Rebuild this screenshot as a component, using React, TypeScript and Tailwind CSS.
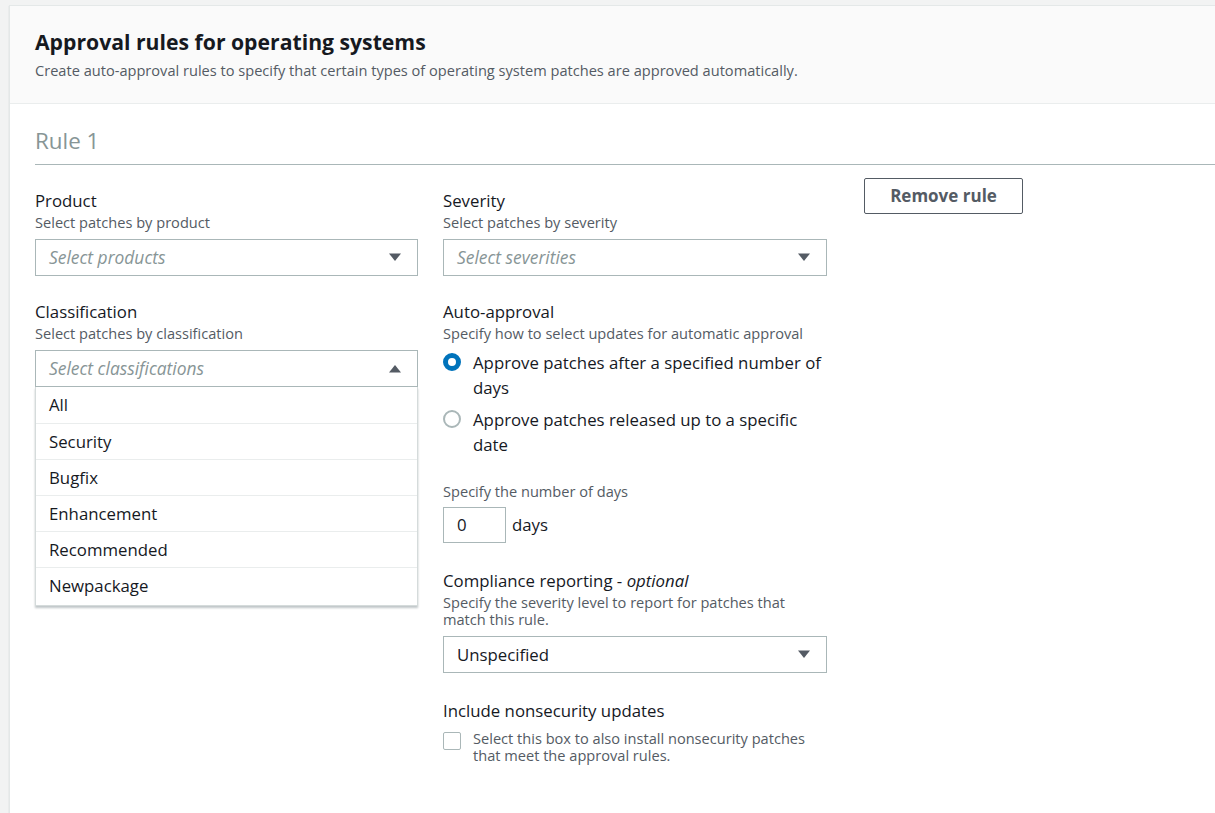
import type { ReactNode } from 'react'

const FONT = { fontFamily: '"Open Sans", "Noto Sans", Arial, sans-serif' }

function Caret({ up = false }: { readonly up?: boolean }) {
  return (
    <svg width="14" height="9" viewBox="0 0 14 9" className="shrink-0">
      {up ? (
        <path d="M1 8.5 L7 1 L13 8.5 Z" fill="#545b64" />
      ) : (
        <path d="M1 0.5 L13 0.5 L7 8 Z" fill="#545b64" />
      )}
    </svg>
  )
}

function Field({
  label,
  description,
  children,
}: {
  readonly label: ReactNode
  readonly description: ReactNode
  readonly children: ReactNode
}) {
  return (
    <div>
      <div className="text-[16.8px] leading-[22px] text-[#16191f]">{label}</div>
      <div className="mt-[2px] text-[14.6px] leading-[17px] text-[#545b64]">
        {description}
      </div>
      <div className="mt-[8px]">{children}</div>
    </div>
  )
}

function Select({
  value,
  placeholder,
  open = false,
}: {
  readonly value?: string
  readonly placeholder?: string
  readonly open?: boolean
}) {
  return (
    <div className="flex h-[37px] items-center justify-between border border-[#aab7b8] bg-white pl-[13px] pr-[15px]">
      {value ? (
        <span className="text-[16.8px] text-[#16191f]">{value}</span>
      ) : (
        <span className="text-[17.4px] italic text-[#879596]">{placeholder}</span>
      )}
      <Caret up={open} />
    </div>
  )
}

const classifications = [
  'All',
  'Security',
  'Bugfix',
  'Enhancement',
  'Recommended',
  'Newpackage',
]

function Radio({
  checked,
  children,
}: {
  readonly checked: boolean
  readonly children: ReactNode
}) {
  return (
    <div className="flex items-start gap-[12px]">
      <span
        className={
          checked
            ? 'mt-[3px] h-[18px] w-[18px] shrink-0 rounded-full border-[5px] border-[#0073bb] bg-white'
            : 'mt-[3px] h-[18px] w-[18px] shrink-0 rounded-full border-2 border-[#aab7b8] bg-white'
        }
      />
      <span className="text-[16.8px] leading-[25px] text-[#16191f]">{children}</span>
    </div>
  )
}

export default function App() {
  return (
    <div
      className="min-h-[813px] overflow-hidden bg-[#f2f3f3] pl-[9px] pt-[5px]"
      style={FONT}
    >
      <div className="min-h-[808px] border-l border-t border-[#e4e8e8] bg-white shadow-[0_1px_1px_rgba(0,28,36,0.2)]">
        <header className="border-b border-[#eaeded] bg-[#fafafa] px-[25px] pb-[23px] pt-[22px]">
          <h1 className="text-[21.2px] font-bold leading-[28px] text-[#16191f]">
            Approval rules for operating systems
          </h1>
          <p className="mt-[4px] text-[14.6px] leading-[20px] text-[#545b64]">
            Create auto-approval rules to specify that certain types of operating
            system patches are approved automatically.
          </p>
        </header>

        <section className="pl-[25px]">
          <h2 className="border-b border-[#aab7b8] pb-[9px] pt-[23px] text-[22.4px] leading-[28px] text-[#879596]">
            Rule 1
          </h2>

          <div className="flex items-start">
            <div className="w-[383px] pt-[25px]">
              <Field label="Product" description="Select patches by product">
                <Select placeholder="Select products" />
              </Field>

              <div className="mt-[25px]">
                <Field
                  label="Classification"
                  description="Select patches by classification"
                >
                  <Select placeholder="Select classifications" open />
                  <ul className="border border-t-0 border-[#d5dbdb] bg-white pb-[2px] shadow-[0_2px_2px_rgba(0,28,36,0.25)]">
                    {classifications.map((c, i) => (
                      <li
                        key={c}
                        className={
                          i === 0
                            ? 'flex h-[36px] items-center px-[13px] text-[16.8px] text-[#16191f]'
                            : 'flex h-[36px] items-center border-t border-[#eaeded] px-[13px] text-[16.8px] text-[#16191f]'
                        }
                      >
                        {c}
                      </li>
                    ))}
                  </ul>
                </Field>
              </div>
            </div>

            <div className="ml-[25px] w-[384px] pt-[25px]">
              <Field label="Severity" description="Select patches by severity">
                <Select placeholder="Select severities" />
              </Field>

              <div className="mt-[25px]">
                <div className="text-[16.8px] leading-[22px] text-[#16191f]">
                  Auto-approval
                </div>
                <div className="mt-[2px] text-[14.6px] leading-[17px] text-[#545b64]">
                  Specify how to select updates for automatic approval
                </div>
                <div className="mt-[8px] flex flex-col gap-[7px]">
                  <Radio checked>
                    Approve patches after a specified number of days
                  </Radio>
                  <Radio checked={false}>
                    Approve patches released up to a specific date
                  </Radio>
                </div>
              </div>

              <div className="mt-[26px] text-[14.6px] leading-[17px] text-[#545b64]">
                Specify the number of days
              </div>
              <div className="mt-[7px] flex items-center gap-[6px]">
                <div className="flex h-[36px] w-[63px] items-center border border-[#aab7b8] pl-[13px] text-[16.8px] text-[#16191f]">
                  0
                </div>
                <span className="text-[16.8px] text-[#16191f]">days</span>
              </div>

              <div className="mt-[27px]">
                <Field
                  label={
                    <>
                      Compliance reporting - <i>optional</i>
                    </>
                  }
                  description="Specify the severity level to report for patches that match this rule."
                >
                  <Select value="Unspecified" />
                </Field>
              </div>

              <div className="mt-[27px] text-[16.8px] leading-[22px] text-[#16191f]">
                Include nonsecurity updates
              </div>
              <div className="mt-[8px] flex items-start gap-[12px]">
                <span className="mt-[2px] h-[18px] w-[18px] shrink-0 rounded-[2px] border border-[#aab7b8] bg-white" />
                <span className="text-[14.6px] leading-[17px] text-[#545b64]">
                  Select this box to also install nonsecurity patches that meet
                  the approval rules.
                </span>
              </div>
            </div>

            <div className="ml-[37px] pt-[13px]">
              <button className="h-[36px] w-[159px] rounded-[2px] border border-[#545b64] bg-white text-[17px] font-bold text-[#545b64]">
                Remove rule
              </button>
            </div>
          </div>
        </section>
      </div>
    </div>
  )
}
